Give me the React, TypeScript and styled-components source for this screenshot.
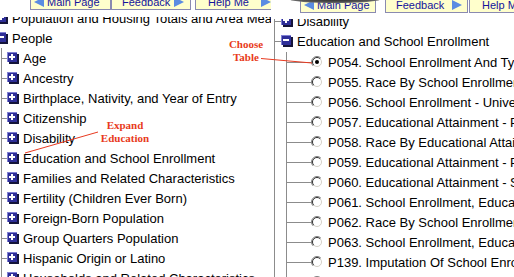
import React from "react";
import styled, { createGlobalStyle } from "styled-components";

const GlobalStyle = createGlobalStyle`
  html, body {
    margin: 0;
    padding: 0;
    background: #fff;
  }
  body {
    font-family: "Liberation Sans", Arial, sans-serif;
  }
`;

const leftTopics = [
  "Birthplace, Nativity, and Year of Entry",
  "Citizenship",
  "Disability",
  "Education and School Enrollment",
  "Families and Related Characteristics",
  "Fertility (Children Ever Born)",
  "Foreign-Born Population",
  "Group Quarters Population",
  "Hispanic Origin or Latino",
  "Households and Related Characteristics",
];

const tables = [
  "P054. School Enrollment And Type Of School By Age",
  "P055. Race By School Enrollment And Type Of School",
  "P056. School Enrollment - University Level",
  "P057. Educational Attainment - Population 18 Years",
  "P058. Race By Educational Attainment",
  "P059. Educational Attainment - Population 25 Years",
  "P060. Educational Attainment - Sex By Age",
  "P061. School Enrollment, Educational Attainment",
  "P062. Race By School Enrollment",
  "P063. School Enrollment, Educational Attainment",
  "P139. Imputation Of School Enrollment",
  "P140. Imputation Of Educational Attainment",
];

const Screen = styled.div`
  position: relative;
  display: flex;
  width: 514px;
  height: 277px;
  overflow: hidden;
  background: #fff;
`;

const Pane = styled.div<{ $w: number }>`
  position: relative;
  display: flex;
  flex-direction: column;
  width: ${(p) => p.$w}px;
  flex-shrink: 0;
  overflow: hidden;
`;

const Toolbar = styled.div<{ $h: number }>`
  height: ${(p) => p.$h}px;
  flex-shrink: 0;
  overflow: hidden;
`;

const ButtonRow = styled.div<{ $top: number; $left: number }>`
  display: flex;
  margin-top: ${(p) => p.$top}px;
  padding-left: ${(p) => p.$left}px;
`;

const NavButton = styled.div<{ $w: number; $gap?: number; $pl: number; $pr?: number; $split?: boolean }>`
  display: flex;
  align-items: center;
  justify-content: ${(p) => (p.$split ? "space-between" : "flex-start")};
  gap: 3px;
  box-sizing: border-box;
  width: ${(p) => p.$w}px;
  height: 16px;
  flex-shrink: 0;
  margin-right: ${(p) => p.$gap ?? 0}px;
  padding: 0 ${(p) => p.$pr ?? 0}px 0 ${(p) => p.$pl}px;
  border: 1px solid #8a8ab0;
  background: #ffffcc;
  color: #14149c;
  font-size: 11px;
  white-space: nowrap;
`;

const Arrow = styled.span<{ $dir: "left" | "right" }>`
  width: 0;
  height: 0;
  flex-shrink: 0;
  border-top: 5px solid transparent;
  border-bottom: 5px solid transparent;
  ${(p) =>
    p.$dir === "left"
      ? "border-right: 10px solid #5b8ce2;"
      : "border-left: 10px solid #5b8ce2;"}
`;

const Smudge = styled.div`
  position: absolute;
  left: 19px;
  top: -4px;
  width: 90px;
  height: 7px;
  border-radius: 50%;
  background: radial-gradient(ellipse at center, #2a2a2a 0%, #555 55%, #aaa 100%);
`;

const Viewport = styled.div`
  flex: 1;
  overflow: hidden;
`;

const Tree = styled.div<{ $top: number; $left: number }>`
  margin-top: ${(p) => p.$top}px;
  margin-left: ${(p) => p.$left}px;
`;

const Branch = styled.div<{ $left: number; $top?: number }>`
  margin-left: ${(p) => p.$left}px;
  margin-top: ${(p) => p.$top ?? 0}px;
  border-left: 1px solid #8c8c8c;
`;

const Row = styled.div`
  display: flex;
  align-items: center;
  height: 20px;
  font-size: 13px;
  color: #000;
  white-space: nowrap;
`;

const Stub = styled.span<{ $w: number }>`
  width: ${(p) => p.$w}px;
  height: 1px;
  flex-shrink: 0;
  background: #8c8c8c;
`;

const Label = styled.span<{ $gap: number }>`
  margin-left: ${(p) => p.$gap}px;
`;

const Callout = styled.div<{ $x: number; $y: number; $w: number }>`
  position: absolute;
  left: ${(p) => p.$x}px;
  top: ${(p) => p.$y}px;
  width: ${(p) => p.$w}px;
  text-align: center;
  font-family: "Liberation Serif", "Times New Roman", serif;
  font-weight: bold;
  font-size: 11px;
  line-height: 13px;
  color: #e83a20;
`;

const Pointers = styled.svg`
  position: absolute;
  left: 0;
  top: 0;
  pointer-events: none;
`;

function ToggleIcon({ open }: { open?: boolean }) {
  return (
    <svg width="12" height="12" viewBox="0 0 12 12" style={{ flexShrink: 0 }}>
      <rect x="2" y="2" width="10" height="10" fill="#15153a" />
      <rect x="0" y="0" width="10" height="10" fill="#2e2e98" />
      <rect x="0" y="0" width="10" height="1" fill="#8080d4" />
      <rect x="0" y="0" width="1" height="10" fill="#8080d4" />
      <rect x="2" y="4" width="6" height="2" fill="#fff" />
      {!open && <rect x="4" y="2" width="2" height="6" fill="#fff" />}
    </svg>
  );
}

function Radio({ checked }: { checked?: boolean }) {
  return (
    <svg width="12" height="12" viewBox="0 0 12 12" style={{ flexShrink: 0 }}>
      <circle cx="6" cy="6" r="5.5" fill="#fff" />
      <path d="M2.1 9.9 A5.5 5.5 0 0 1 9.9 2.1" stroke="#808080" fill="none" />
      <path d="M2.8 9.2 A4.5 4.5 0 0 1 9.2 2.8" stroke="#303030" fill="none" />
      <path d="M9.2 2.8 A4.5 4.5 0 0 1 2.8 9.2" stroke="#d4d0c8" fill="none" />
      {checked && <circle cx="6" cy="6" r="2" fill="#000" />}
    </svg>
  );
}

function Buttons({ right }: { right?: boolean }) {
  if (right) {
    return (
      <ButtonRow $top={-3} $left={29}>
        <NavButton $w={76} $gap={9} $pl={3}>
          <Arrow $dir="left" />
          Main Page
        </NavButton>
        <NavButton $w={83} $gap={1} $pl={10} $pr={5} $split>
          Feedback
          <Arrow $dir="right" />
        </NavButton>
        <NavButton $w={80} $pl={12}>
          Help Me
        </NavButton>
      </ButtonRow>
    );
  }
  return (
    <ButtonRow $top={-6} $left={30}>
      <NavButton $w={81} $pl={3}>
        <Arrow $dir="left" />
        Main Page
      </NavButton>
      <NavButton $w={80} $gap={4} $pl={10} $pr={6} $split>
        Feedback
        <Arrow $dir="right" />
      </NavButton>
      <NavButton $w={78} $pl={12} $pr={1} $split>
        Help Me
        <Arrow $dir="right" />
      </NavButton>
    </ButtonRow>
  );
}

export default function App() {
  return (
    <Screen>
      <GlobalStyle />
      <Pane $w={271}>
        <Toolbar $h={17}>
          <Buttons />
        </Toolbar>
        <Viewport>
          <Tree $top={-9} $left={-4}>
            <Row>
              <ToggleIcon />
              <Label $gap={4}>Population and Housing Totals and Area Measurements</Label>
            </Row>
            <Row>
              <ToggleIcon open />
              <Label $gap={4}>People</Label>
            </Row>
            <Branch $left={5}>
              {["Age", "Ancestry", ...leftTopics].map((t) => (
                <Row key={t}>
                  <Stub $w={5} />
                  <ToggleIcon />
                  <Label $gap={4}>{t}</Label>
                </Row>
              ))}
            </Branch>
          </Tree>
        </Viewport>
      </Pane>

      <Pane $w={243}>
        <Smudge />
        <Toolbar $h={19}>
          <Buttons right />
        </Toolbar>
        <Viewport>
          <Tree $top={-8} $left={3}>
            <Branch $left={0}>
              <Row>
                <Stub $w={6} />
                <ToggleIcon />
                <Label $gap={4}>Disability</Label>
              </Row>
              <Row>
                <Stub $w={6} />
                <ToggleIcon open />
                <Label $gap={4}>Education and School Enrollment</Label>
              </Row>
              <Branch $left={11} $top={1}>
                {tables.map((t, i) => (
                  <Row key={t}>
                    <Stub $w={24} />
                    <Radio checked={i === 0} />
                    <Label $gap={5}>{t}</Label>
                  </Row>
                ))}
              </Branch>
            </Branch>
          </Tree>
        </Viewport>
      </Pane>

      <Callout $x={226} $y={38} $w={40}>
        Choose
        <br />
        Table
      </Callout>
      <Callout $x={100} $y={119} $w={50}>
        Expand
        <br />
        Education
      </Callout>
      <Pointers width="514" height="277">
        <line x1="261" y1="58.5" x2="312" y2="63" stroke="#e83a20" strokeWidth="1" />
        <line x1="98" y1="132" x2="25" y2="153" stroke="#e83a20" strokeWidth="1" />
      </Pointers>
    </Screen>
  );
}
